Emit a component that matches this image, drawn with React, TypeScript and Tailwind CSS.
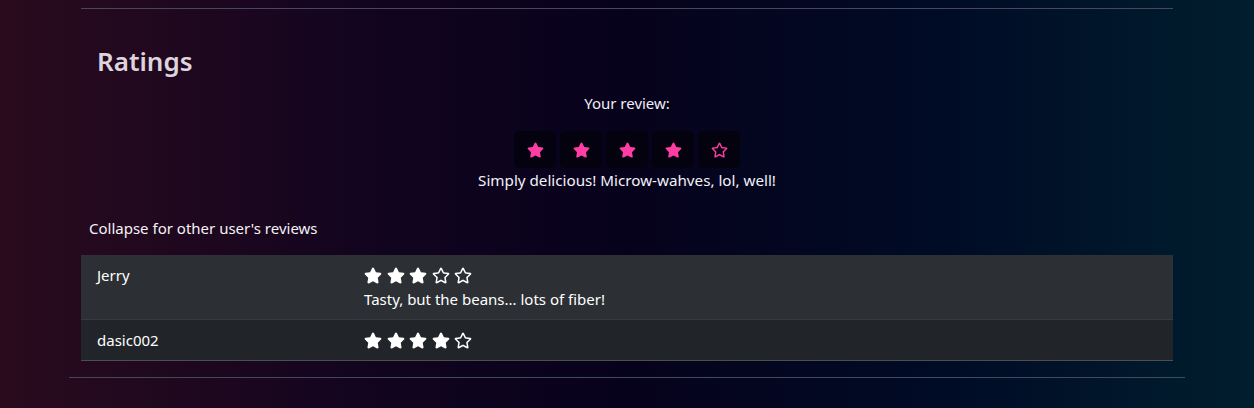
import React from "react";
import { FaStar, FaRegStar } from "react-icons/fa";

function WhiteStars({ n }: { n: number }) {
  return (
    <div className="flex h-6 items-center gap-[4.5px]">
      {[0, 1, 2, 3, 4].map((i) =>
        i < n ? (
          <FaStar key={i} className="h-[17px] w-[18px] text-white" />
        ) : (
          <FaRegStar key={i} className="h-[17px] w-[18px] text-white" />
        )
      )}
    </div>
  );
}

export default function App() {
  const mine = 4;
  return (
    <div
      className="min-h-[408px] w-full bg-[linear-gradient(to_right,#2a0b1e_0%,#12041f_30%,#07021c_50%,#000b25_75%,#011e2e_100%)] text-white"
      style={{ fontFamily: '"Noto Sans", "Open Sans", sans-serif' }}
    >
      <div className="mx-auto w-[1116px] pt-2">
        <div className="mx-auto w-[1092px]">
          <div className="h-px w-full bg-[#4a4660]" />
          <h2 className="mt-[32px] pl-4 text-[26px] font-semibold leading-[40px] text-[#ddd4de]">
            Ratings
          </h2>
          <div className="mt-[10px] flex flex-col items-center">
            <div className="text-[15px] leading-6 text-[#f0eef6]">Your review:</div>
            <div className="mt-[16px] flex gap-[4px]">
              {[0, 1, 2, 3, 4].map((i) => (
                <div
                  key={i}
                  className="flex h-[37px] w-[42px] items-center justify-center rounded-[5px] bg-[#05020f]"
                >
                  {i < mine ? (
                    <FaStar className="h-[16px] w-[17px] text-[#ff3da5]" />
                  ) : (
                    <FaRegStar className="h-[16px] w-[17px] text-[#ff3da5]" />
                  )}
                </div>
              ))}
            </div>
            <div className="text-[15.2px] leading-6 text-[#f2f2f8]">
              Simply delicious! Microw-wahves, lol, well!
            </div>
          </div>
          <div className="mt-[24px] pl-2 text-[15px] leading-6 text-[#f4f2f6]">
            Collapse for other user's reviews
          </div>
          <div className="mt-[15px] border-b border-[#4b4f53] text-[15px] text-white">
            <div className="flex border-b border-[#373b3e] bg-[#2c3034]">
              <div className="w-[275px] py-2 pl-4 leading-6">Jerry</div>
              <div className="flex-1 py-2 pl-2">
                <WhiteStars n={3} />
                <div className="leading-6">Tasty, but the beans... lots of fiber!</div>
              </div>
            </div>
            <div className="flex bg-[#212529]">
              <div className="w-[275px] py-2 pl-4 leading-6">dasic002</div>
              <div className="flex-1 py-2 pl-2">
                <WhiteStars n={4} />
              </div>
            </div>
          </div>
        </div>
        <div className="mt-4 h-px w-full bg-[#3f4a5c]" />
      </div>
    </div>
  );
}
